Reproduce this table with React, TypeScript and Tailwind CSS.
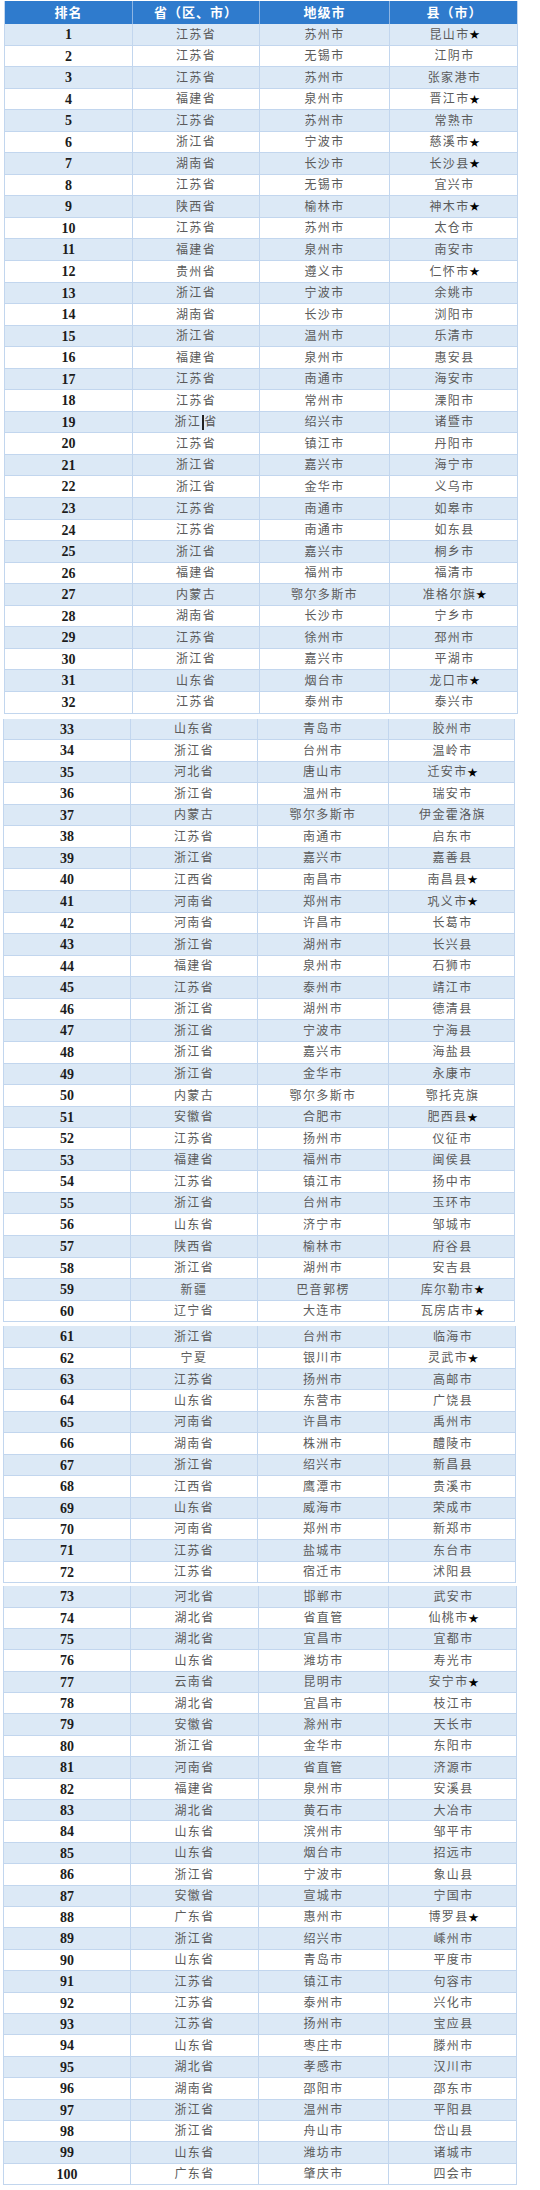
import React from 'react';

type Row = [string, string, string, boolean?];

// 省, 地级市, 县(市), 是否带★
const rows: Row[] = [
  ['江苏省', '苏州市', '昆山市', true],
  ['江苏省', '无锡市', '江阴市'],
  ['江苏省', '苏州市', '张家港市'],
  ['福建省', '泉州市', '晋江市', true],
  ['江苏省', '苏州市', '常熟市'],
  ['浙江省', '宁波市', '慈溪市', true],
  ['湖南省', '长沙市', '长沙县', true],
  ['江苏省', '无锡市', '宜兴市'],
  ['陕西省', '榆林市', '神木市', true],
  ['江苏省', '苏州市', '太仓市'],
  ['福建省', '泉州市', '南安市'],
  ['贵州省', '遵义市', '仁怀市', true],
  ['浙江省', '宁波市', '余姚市'],
  ['湖南省', '长沙市', '浏阳市'],
  ['浙江省', '温州市', '乐清市'],
  ['福建省', '泉州市', '惠安县'],
  ['江苏省', '南通市', '海安市'],
  ['江苏省', '常州市', '溧阳市'],
  ['浙江省', '绍兴市', '诸暨市'],
  ['江苏省', '镇江市', '丹阳市'],
  ['浙江省', '嘉兴市', '海宁市'],
  ['浙江省', '金华市', '义乌市'],
  ['江苏省', '南通市', '如皋市'],
  ['江苏省', '南通市', '如东县'],
  ['浙江省', '嘉兴市', '桐乡市'],
  ['福建省', '福州市', '福清市'],
  ['内蒙古', '鄂尔多斯市', '准格尔旗', true],
  ['湖南省', '长沙市', '宁乡市'],
  ['江苏省', '徐州市', '邳州市'],
  ['浙江省', '嘉兴市', '平湖市'],
  ['山东省', '烟台市', '龙口市', true],
  ['江苏省', '泰州市', '泰兴市'],
  ['山东省', '青岛市', '胶州市'],
  ['浙江省', '台州市', '温岭市'],
  ['河北省', '唐山市', '迁安市', true],
  ['浙江省', '温州市', '瑞安市'],
  ['内蒙古', '鄂尔多斯市', '伊金霍洛旗'],
  ['江苏省', '南通市', '启东市'],
  ['浙江省', '嘉兴市', '嘉善县'],
  ['江西省', '南昌市', '南昌县', true],
  ['河南省', '郑州市', '巩义市', true],
  ['河南省', '许昌市', '长葛市'],
  ['浙江省', '湖州市', '长兴县'],
  ['福建省', '泉州市', '石狮市'],
  ['江苏省', '泰州市', '靖江市'],
  ['浙江省', '湖州市', '德清县'],
  ['浙江省', '宁波市', '宁海县'],
  ['浙江省', '嘉兴市', '海盐县'],
  ['浙江省', '金华市', '永康市'],
  ['内蒙古', '鄂尔多斯市', '鄂托克旗'],
  ['安徽省', '合肥市', '肥西县', true],
  ['江苏省', '扬州市', '仪征市'],
  ['福建省', '福州市', '闽侯县'],
  ['江苏省', '镇江市', '扬中市'],
  ['浙江省', '台州市', '玉环市'],
  ['山东省', '济宁市', '邹城市'],
  ['陕西省', '榆林市', '府谷县'],
  ['浙江省', '湖州市', '安吉县'],
  ['新疆', '巴音郭楞', '库尔勒市', true],
  ['辽宁省', '大连市', '瓦房店市', true],
  ['浙江省', '台州市', '临海市'],
  ['宁夏', '银川市', '灵武市', true],
  ['江苏省', '扬州市', '高邮市'],
  ['山东省', '东营市', '广饶县'],
  ['河南省', '许昌市', '禹州市'],
  ['湖南省', '株洲市', '醴陵市'],
  ['浙江省', '绍兴市', '新昌县'],
  ['江西省', '鹰潭市', '贵溪市'],
  ['山东省', '威海市', '荣成市'],
  ['河南省', '郑州市', '新郑市'],
  ['江苏省', '盐城市', '东台市'],
  ['江苏省', '宿迁市', '沭阳县'],
  ['河北省', '邯郸市', '武安市'],
  ['湖北省', '省直管', '仙桃市', true],
  ['湖北省', '宜昌市', '宜都市'],
  ['山东省', '潍坊市', '寿光市'],
  ['云南省', '昆明市', '安宁市', true],
  ['湖北省', '宜昌市', '枝江市'],
  ['安徽省', '滁州市', '天长市'],
  ['浙江省', '金华市', '东阳市'],
  ['河南省', '省直管', '济源市'],
  ['福建省', '泉州市', '安溪县'],
  ['湖北省', '黄石市', '大冶市'],
  ['山东省', '滨州市', '邹平市'],
  ['山东省', '烟台市', '招远市'],
  ['浙江省', '宁波市', '象山县'],
  ['安徽省', '宣城市', '宁国市'],
  ['广东省', '惠州市', '博罗县', true],
  ['浙江省', '绍兴市', '嵊州市'],
  ['山东省', '青岛市', '平度市'],
  ['江苏省', '镇江市', '句容市'],
  ['江苏省', '泰州市', '兴化市'],
  ['江苏省', '扬州市', '宝应县'],
  ['山东省', '枣庄市', '滕州市'],
  ['湖北省', '孝感市', '汉川市'],
  ['湖南省', '邵阳市', '邵东市'],
  ['浙江省', '温州市', '平阳县'],
  ['浙江省', '舟山市', '岱山县'],
  ['山东省', '潍坊市', '诸城市'],
  ['广东省', '肇庆市', '四会市'],
];

interface Segment {
  start: number;
  end: number;
  header?: boolean;
  wrap: string;
  cols: string;
  rowH: string;
}

const segments: Segment[] = [
  { start: 0, end: 32, header: true, wrap: 'mt-[1px] ml-[4px] w-[514px]', cols: 'grid-cols-[128px_127px_130px_129px]', rowH: 'h-[21.56px]' },
  { start: 32, end: 60, wrap: 'mt-[5px] ml-[3px] w-[512px]', cols: 'grid-cols-[127px_127px_131px_127px]', rowH: 'h-[21.57px]' },
  { start: 60, end: 72, wrap: 'mt-[4px] ml-[3px] w-[513px]', cols: 'grid-cols-[127px_127px_131px_128px]', rowH: 'h-[21.42px]' },
  { start: 72, end: 100, wrap: 'mt-[3px] ml-[3px] w-[514px]', cols: 'grid-cols-[127px_128px_130px_129px]', rowH: 'h-[21.4px]' },
];

const cjk = "font-['Liberation_Serif','Noto_Sans_CJK_SC',serif]";
const cell = 'flex items-center justify-center border-r border-[#c2d6ee] last:border-r-0';

function Province({ name, rank }: { name: string; rank: number }) {
  // 第19行截图里有个光标竖线
  if (rank === 19) {
    return (
      <span className="flex items-center">
        浙江
        <span className="inline-block w-[2px] h-[15px] bg-[#222] mx-[0.5px]" />
        省
      </span>
    );
  }
  return <span>{name}</span>;
}

export default function App() {
  return (
    <div className={`w-[540px] h-[2190px] bg-white overflow-hidden ${cjk}`}>
      {segments.map((seg, si) => (
        <div key={si} className={`${seg.wrap} border-l border-r border-[#c2d6ee]`}>
          {seg.header && (
            <div className={`grid ${seg.cols} h-[23px] bg-[#2f7bcd] text-white font-bold text-[13px] tracking-[1px]`}>
              <div className="flex items-center justify-center border-r border-[#8db5e3]">排名</div>
              <div className="flex items-center justify-center border-r border-[#8db5e3]">省（区、市）</div>
              <div className="flex items-center justify-center border-r border-[#8db5e3]">地级市</div>
              <div className="flex items-center justify-center">县（市）</div>
            </div>
          )}
          {rows.slice(seg.start, seg.end).map((r, i) => {
            const rank = seg.start + i + 1;
            const odd = rank % 2 === 1;
            return (
              <div
                key={rank}
                className={`grid ${seg.cols} ${seg.rowH} border-b border-[#c2d6ee] ${odd ? 'bg-[#dce9f6]' : 'bg-white'}`}
              >
                <div className={`${cell} font-['Liberation_Serif',serif] font-bold text-[14px] text-[#1c1c1c]`}>{rank}</div>
                <div className={`${cell} text-[12px] tracking-[1.4px] text-[#5a5a5a]`}>
                  <Province name={r[0]} rank={rank} />
                </div>
                <div className={`${cell} text-[12px] tracking-[1.4px] text-[#5a5a5a]`}>{r[1]}</div>
                <div className={`${cell} text-[12px] tracking-[1.4px] text-[#5a5a5a]`}>
                  <span>{r[2]}</span>
                  {r[3] && <span className="text-[10px] text-black tracking-normal">★</span>}
                </div>
              </div>
            );
          })}
        </div>
      ))}
    </div>
  );
}
